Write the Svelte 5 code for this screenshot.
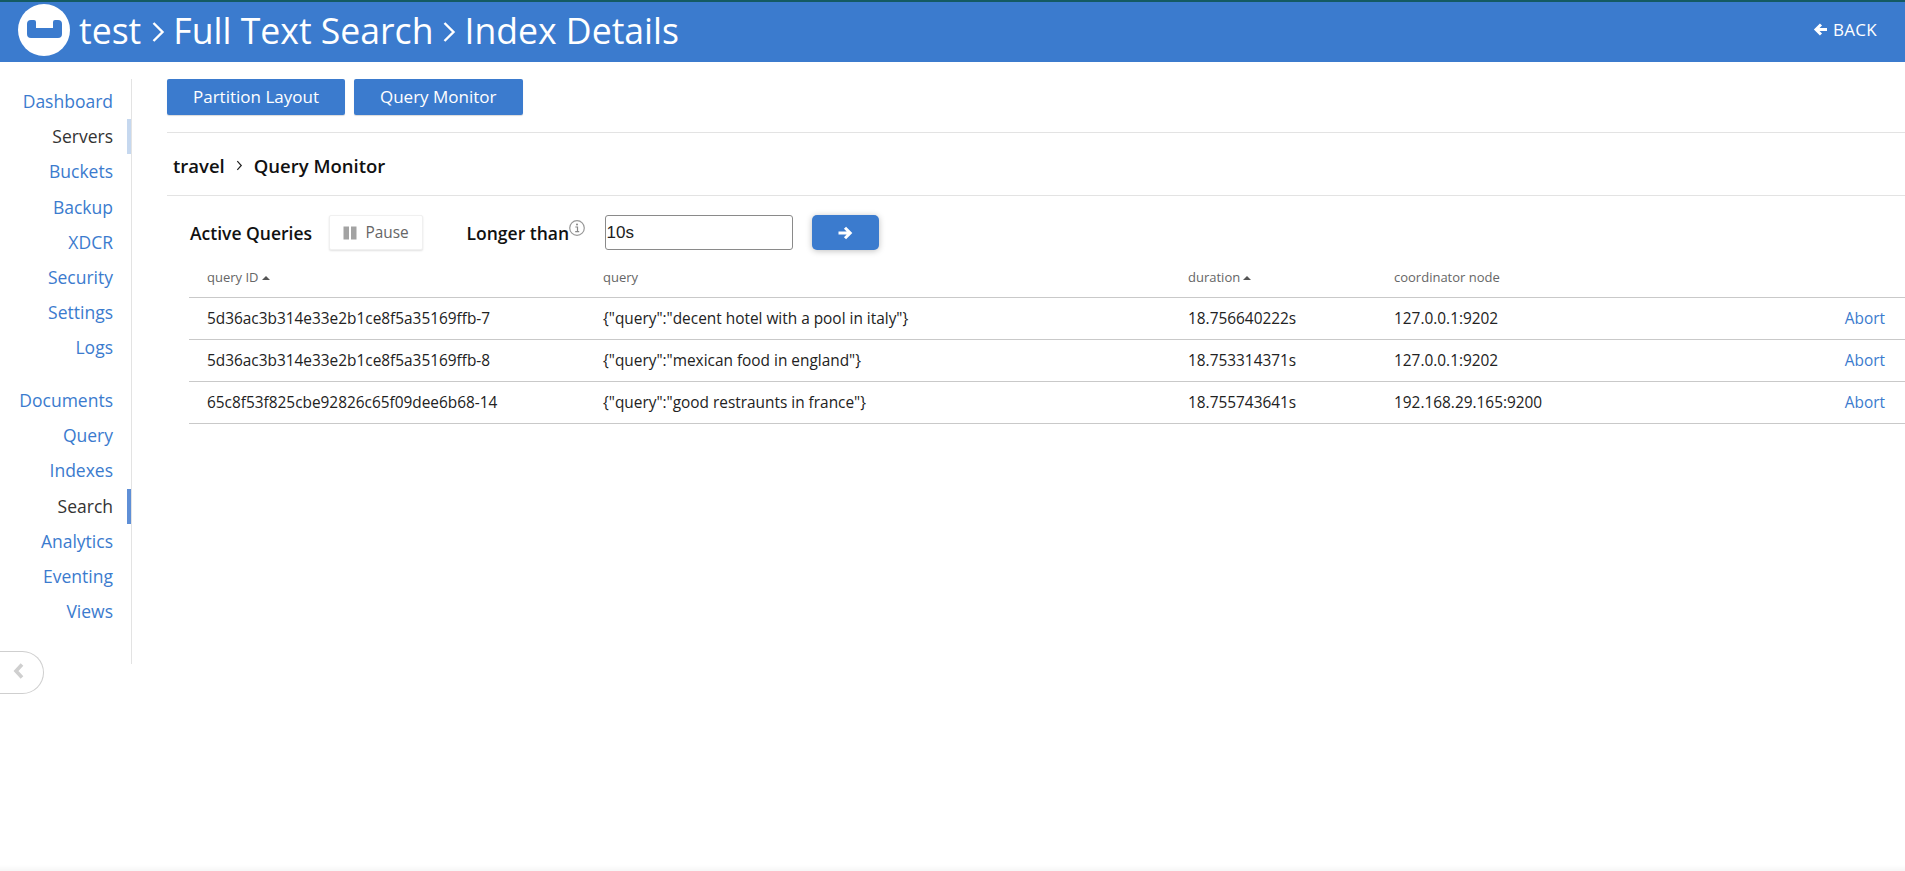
<script>
  const nav1 = ['Dashboard', 'Servers', 'Buckets', 'Backup', 'XDCR', 'Security', 'Settings', 'Logs'];
  const nav2 = ['Documents', 'Query', 'Indexes', 'Search', 'Analytics', 'Eventing', 'Views'];
  const rows = [
    ['5d36ac3b314e33e2b1ce8f5a35169ffb-7', '{"query":"decent hotel with a pool in italy"}', '18.756640222s', '127.0.0.1:9202'],
    ['5d36ac3b314e33e2b1ce8f5a35169ffb-8', '{"query":"mexican food in england"}', '18.753314371s', '127.0.0.1:9202'],
    ['65c8f53f825cbe92826c65f09dee6b68-14', '{"query":"good restraunts in france"}', '18.755743641s', '192.168.29.165:9200']
  ];
</script>

<div class="page">
  <header class="top">
    <div class="brand">
      <svg class="logo" viewBox="0 0 52 52" width="52" height="52">
        <circle cx="26" cy="26" r="26" fill="#fff" />
        <path d="M9 20a4 4 0 0 1 4-4h3a2 2 0 0 1 2 2v6h17v-6a2 2 0 0 1 2-2h3a4 4 0 0 1 4 4v10a4 4 0 0 1-4 4h-27a4 4 0 0 1-4-4z" fill="#3b7bce" />
      </svg>
      <h1>test<svg class="crumb" viewBox="0 0 14 24" width="14" height="24"><path d="M2.500 3l9 9-9 9" fill="none" stroke="#fff" stroke-width="2.400" /></svg>Full Text Search<svg class="crumb second-crumb" viewBox="0 0 14 24" width="14" height="24"><path d="M2.500 3l9 9-9 9" fill="none" stroke="#fff" stroke-width="2.400" /></svg>Index Details</h1>
    </div>
    <a class="back" href="#back">
      <svg viewBox="0 0 16 14" width="16" height="15"><path d="M14 7H4M8 2L3 7l5 5" fill="none" stroke="#fff" stroke-width="3" /></svg>
      BACK
    </a>
  </header>

  <div class="body">
    <aside class="side">
      <nav class="navlist">
        {#each nav1 as n}
          <a href="#n" class="nav" class:cur={n === 'Servers'} class:light={n === 'Servers'}>{n}</a>
        {/each}
      </nav>
      <nav class="navlist second">
        {#each nav2 as n}
          <a href="#n" class="nav" class:cur={n === 'Search'}>{n}</a>
        {/each}
      </nav>
      <button class="collapse" aria-label="collapse">
        <svg viewBox="0 0 12 16" width="12" height="16"><path d="M9 1.500L3 8l6 6.500" fill="none" stroke="#cfcfcf" stroke-width="3.600" /></svg>
      </button>
    </aside>

    <main class="main">
      <div class="tabs">
        <button class="tab">Partition Layout</button>
        <button class="tab">Query Monitor</button>
      </div>
      <div class="crumbs">
        <span>travel</span>
        <svg viewBox="0 0 8 12" width="7" height="11"><path d="M1.500 1l4.500 5-4.500 5" fill="none" stroke="#222" stroke-width="1.400" /></svg>
        <span>Query Monitor</span>
      </div>
      <div class="section">
        <div class="controls">
          <span class="label">Active Queries</span>
          <button class="pause">
            <svg viewBox="0 0 14 14" width="14" height="14"><path d="M0.500 0.500h5.500v13H0.500zM8 0.500h5.500v13H8z" fill="#a3a3a3" /></svg>
            Pause
          </button>
          <span class="label longer">Longer than</span>
          <svg class="info" viewBox="0 0 16 16" width="16" height="16">
            <circle cx="8" cy="8" r="7.300" fill="none" stroke="#999" stroke-width="1.200" />
            <circle cx="8" cy="4.600" r="1" fill="#888" />
            <path d="M6.300 7h2.200v4.500M6.200 11.600h4" fill="none" stroke="#888" stroke-width="1.200" />
          </svg>
          <input class="field" value="10s" />
          <button class="go" aria-label="go">
            <svg viewBox="0 0 16 14" width="16" height="14"><path d="M1.500 7h10.500M8 1.800L13.200 7 8 12.200" fill="none" stroke="#fff" stroke-width="3" /></svg>
          </button>
        </div>
        <div class="table">
          <div class="row head">
            <div>query ID<span class="caret"></span></div>
            <div>query</div>
            <div>duration<span class="caret"></span></div>
            <div>coordinator node</div>
            <div></div>
          </div>
          {#each rows as r}
            <div class="row">
              <div>{r[0]}</div>
              <div>{r[1]}</div>
              <div>{r[2]}</div>
              <div>{r[3]}</div>
              <div class="act"><a href="#a">Abort</a></div>
            </div>
          {/each}
        </div>
      </div>
    </main>
  </div>
  <div class="fade"></div>
</div>

<style>
  :global(body) {
    margin: 0;
    background: #fff;
    font-family: "Open Sans", "Noto Sans", sans-serif;
    color: #222;
  }
  .page {
    width: 1905px;
    height: 871px;
    display: flex;
    flex-direction: column;
    overflow: hidden;
  }
  .top {
    height: 62px;
    box-sizing: border-box;
    flex: none;
    background: #3b7bce;
    border-top: 2px solid #145a62;
    display: flex;
    align-items: center;
    justify-content: space-between;
    padding: 0 28px 5px 18px;
  }
  .brand {
    display: flex;
    align-items: center;
    gap: 9px;
  }
  .logo {
    display: block;
  }
  h1 {
    margin: 0;
    font-size: 35.600px;
    font-weight: 400;
    color: #fff;
    display: flex;
    align-items: center;
    line-height: 52px;
    white-space: nowrap;
  }
  .crumb {
    margin: 5px 8px 0 10px;
  }
  .second-crumb {
    margin: 5px 8px 0 9px;
  }
  .back {
    color: #fff;
    text-decoration: none;
    font-size: 17px;
    letter-spacing: 0.3px;
    display: flex;
    align-items: center;
    gap: 4px;
  }
  .body {
    flex: 1;
    display: flex;
    align-items: flex-start;
  }
  .side {
    width: 131px;
    flex: none;
    height: 585px;
    margin-top: 17px;
    border-right: 1px solid #e3e3e3;
    position: relative;
    box-sizing: content-box;
  }
  .navlist {
    display: flex;
    flex-direction: column;
  }
  .second {
    margin-top: 17.500px;
  }
  .nav {
    display: block;
    height: 35.200px;
    line-height: 35.200px;
    padding-right: 14px;
    border-right: 4px solid transparent;
    text-align: right;
    font-size: 17.500px;
    color: #3b7bce;
    text-decoration: none;
  }
  .cur {
    color: #333;
    border-right-color: #5f8fd6;
  }
  .light {
    border-right-color: #c6d8ef;
  }
  .navlist:first-child {
    padding-top: 5px;
  }
  .collapse {
    position: absolute;
    left: 0;
    top: 572px;
    width: 44px;
    height: 43px;
    padding: 0 0 0 13px;
    text-align: left;
    background: #fff;
    border: 1px solid #cfcfcf;
    border-left: 0;
    border-radius: 0 22px 22px 0;
  }
  .main {
    flex: 1;
    min-width: 0;
    margin-top: 17px;
    margin-left: 35px;
  }
  .tabs {
    display: flex;
    gap: 9px;
    padding-bottom: 17px;
    border-bottom: 1px solid #e3e3e3;
  }
  .tab {
    height: 36px;
    padding: 0 26px 2px;
    background: #3b7bce;
    border: 0;
    border-radius: 2px;
    color: #fff;
    font: 400 17px "Open Sans", sans-serif;
    box-shadow: 0 1px 1px rgba(0, 0, 0, 0.15);
  }
  .crumbs {
    height: 63px;
    box-sizing: border-box;
    display: flex;
    align-items: center;
    gap: 11px;
    padding: 2px 0 0 6px;
    border-bottom: 1px solid #e3e3e3;
    font-size: 18.500px;
    font-weight: 600;
    color: #111;
  }
  .section {
    padding-left: 22px;
  }
  .controls {
    display: flex;
    align-items: center;
    height: 35px;
    margin-top: 19px;
    margin-left: 1px;
  }
  .label {
    font-size: 17.500px;
    font-weight: 600;
    color: #111;
  }
  .pause {
    margin-left: 17px;
    width: 94px;
    height: 35px;
    display: flex;
    align-items: center;
    justify-content: center;
    gap: 8px;
    padding: 0;
    background: #fff;
    border: 1px solid #f0f0f0;
    border-radius: 2px;
    box-shadow: 0 1px 2px rgba(0, 0, 0, 0.12);
    color: #666;
    font: 400 15.400px "Open Sans", sans-serif;
  }
  .longer {
    margin-left: 43.500px;
  }
  .info {
    align-self: flex-start;
    margin-top: 5px;
    margin-left: 0;
  }
  .field {
    margin-left: 19.500px;
    width: 188px;
    height: 35px;
    box-sizing: border-box;
    padding: 0 1px;
    border: 1px solid #8a8a8a;
    border-radius: 3px;
    font: 400 17px "Liberation Sans", Arial, sans-serif;
    color: #222;
    outline: none;
  }
  .go {
    margin-left: 19px;
    width: 67px;
    height: 35px;
    background: #3b7bce;
    border: 0;
    border-radius: 5px;
    box-shadow: 0 1px 6px rgba(0, 0, 0, 0.25);
    display: flex;
    align-items: center;
    justify-content: center;
    padding: 0;
  }
  .table {
    margin-top: 13px;
  }
  .row {
    display: grid;
    grid-template-columns: 396px 585px 206px 1fr 120px;
    height: 42px;
    align-items: center;
    padding-left: 18px;
    border-bottom: 1px solid #c9c9c9;
    box-sizing: border-box;
    font-size: 15.400px;
    color: #222;
  }
  .head {
    height: 35px;
    align-items: flex-start;
    padding-top: 5px;
    font-size: 13px;
    color: #666;
  }
  .caret {
    display: inline-block;
    width: 0;
    height: 0;
    margin-left: 3px;
    vertical-align: 2px;
    border-left: 4px solid transparent;
    border-right: 4px solid transparent;
    border-bottom: 4px solid #555;
  }
  .act {
    text-align: right;
    padding-right: 20px;
  }
  .act a {
    color: #3b7bce;
    text-decoration: none;
  }
  .fade {
    height: 6px;
    flex: none;
    background: linear-gradient(to bottom, rgba(0, 0, 0, 0), rgba(0, 0, 0, 0.035));
  }
</style>
